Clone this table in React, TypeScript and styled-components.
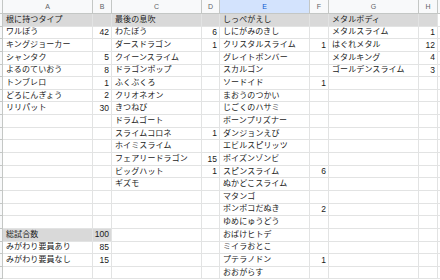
import React from "react";
import styled, { createGlobalStyle } from "styled-components";

const Global = createGlobalStyle`
  html, body { margin: 0; padding: 0; background: #ffffff; }
  body { width: 440px; height: 280px; overflow: hidden; }
`;

const Sheet = styled.div`
  display: grid;
  grid-template-columns: 3px 90px 19px 90px 18px 90px 19px 90px 19px 1fr;
  grid-template-rows: 14px repeat(21, 12.65px);
  width: 440px;
  height: 280px;
  overflow: hidden;
  font-family: "Liberation Sans", "Noto Sans CJK JP", sans-serif;
  background: #ffffff;
`;

const HeaderCell = styled.div<{ $selected?: boolean }>`
  display: flex;
  align-items: center;
  justify-content: center;
  background: ${(p) => (p.$selected ? "#d3e3fd" : "#f8f9fa")};
  color: ${(p) => (p.$selected ? "#0b57d0" : "#5f6368")};
  font-size: 7px;
  border-right: 1px solid #c4c7c5;
  border-bottom: 1px solid #c4c7c5;
  box-sizing: border-box;
`;

const RowHead = styled.div`
  background: #f8f9fa;
  border-right: 1px solid #c4c7c5;
  border-bottom: 1px solid #c4c7c5;
  box-sizing: border-box;
`;

const Cell = styled.div<{ $num?: boolean; $shade?: boolean }>`
  display: flex;
  align-items: center;
  justify-content: ${(p) => (p.$num ? "flex-end" : "flex-start")};
  padding: ${(p) => (p.$num ? "0 2px 0 0" : "0 0 0 3px")};
  background: ${(p) => (p.$shade ? "#d9d9d9" : "#ffffff")};
  color: #1a1a1a;
  font-size: ${(p) => (p.$num ? "8.5px" : "8px")};
  letter-spacing: ${(p) => (p.$num ? "0" : "0.1px")};
  white-space: nowrap;
  overflow: hidden;
  border-right: 1px solid #e2e3e3;
  border-bottom: 1px solid #e2e3e3;
  box-sizing: border-box;
  line-height: 1;
`;

const letters = ["A", "B", "C", "D", "E", "F", "G", "H", ""];

type Row = string[];

const rows: Row[] = [
  ["根に持つタイプ", "", "最後の息吹", "", "しっぺがえし", "", "メタルボディ", ""],
  ["ワルぼう", "42", "わたぼう", "6", "しにがみのきし", "", "メタルスライム", "1"],
  ["キングジョーカー", "", "ダースドラゴン", "1", "クリスタルスライム", "1", "はぐれメタル", "12"],
  ["シャンタク", "5", "クイーンスライム", "", "グレイトボンバー", "", "メタルキング", "4"],
  ["よるのていおう", "8", "ドラゴンポップ", "", "スカルゴン", "", "ゴールデンスライム", "3"],
  ["トンブレロ", "1", "ふくぶくろ", "", "ソードイド", "1", "", ""],
  ["どろにんぎょう", "2", "クリオネオン", "", "まおうのつかい", "", "", ""],
  ["リリパット", "30", "きつねび", "", "じごくのハサミ", "", "", ""],
  ["", "", "ドラムゴート", "", "ボーンプリズナー", "", "", ""],
  ["", "", "スライムコロネ", "1", "ダンジョンえび", "", "", ""],
  ["", "", "ホイミスライム", "", "エビルスピリッツ", "", "", ""],
  ["", "", "フェアリードラゴン", "15", "ポイズンゾンビ", "", "", ""],
  ["", "", "ビッグハット", "1", "スピンスライム", "6", "", ""],
  ["", "", "ギズモ", "", "ぬかどこスライム", "", "", ""],
  ["", "", "", "", "マタンゴ", "", "", ""],
  ["", "", "", "", "ポンポコだぬき", "2", "", ""],
  ["", "", "", "", "ゆめにゅうどう", "", "", ""],
  ["総試合数", "100", "", "", "おばけヒトデ", "", "", ""],
  ["みがわり要員あり", "85", "", "", "ミイラおとこ", "", "", ""],
  ["みがわり要員なし", "15", "", "", "プテラノドン", "1", "", ""],
  ["", "", "", "", "おおがらす", "", "", ""],
];

export default function App() {
  return (
    <>
      <Global />
      <Sheet>
        <HeaderCell />
        {letters.map((l, i) => (
          <HeaderCell key={i} $selected={l === "E"}>
            {l}
          </HeaderCell>
        ))}
        {rows.map((r, ri) => (
          <React.Fragment key={ri}>
            <RowHead />
            {r.map((v, ci) => {
              const num = ci % 2 === 1;
              const shade = ri === 0 || (ri === 17 && ci < 2);
              return (
                <Cell key={ci} $num={num} $shade={shade}>
                  {v}
                </Cell>
              );
            })}
            <Cell />
          </React.Fragment>
        ))}
      </Sheet>
    </>
  );
}
